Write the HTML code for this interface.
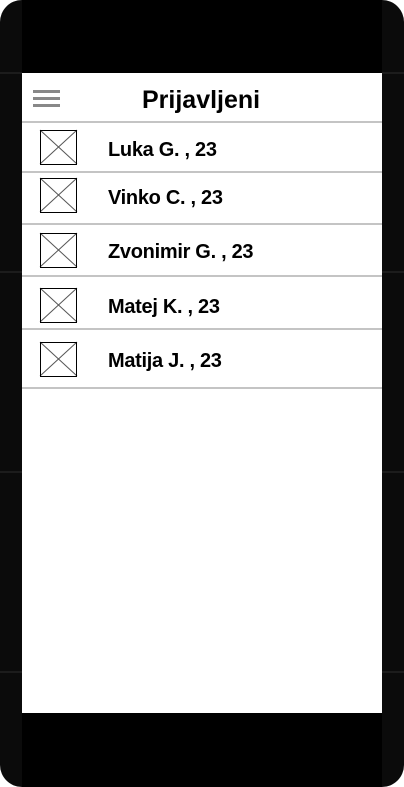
<!DOCTYPE html><html><head><style>
body{margin:0;width:404px;height:787px;background:#fff;position:relative;overflow:hidden;font-family:"Liberation Sans",sans-serif}
.ph{position:absolute;left:0;top:0;width:404px;height:787px;background:#0b0b0b;border-radius:22px}
.scr{position:absolute;left:22px;top:0;width:360px;height:787px;background:#000}
.w{position:absolute;left:22px;top:73px;width:360px;height:640px;background:#fff}
.sl{position:absolute;height:2px;background:#1c1c1c;width:22px}
.hl{position:absolute;left:0;width:360px;height:2px;background:#c4c4c4}
.im{position:absolute;left:18px;width:35px;height:33px;border:1px solid #000}
.t{position:absolute;left:86px;font-weight:bold;font-size:20px;color:#000;letter-spacing:-0.3px}
.bar{position:absolute;left:11px;width:27px;height:3px;background:#888}
</style></head><body>
<div class="ph"></div><div class="scr"></div>
<div class="sl" style="left:0;top:72px"></div><div class="sl" style="left:382px;top:72px"></div>
<div class="sl" style="left:0;top:271px"></div><div class="sl" style="left:382px;top:271px"></div>
<div class="sl" style="left:0;top:471px"></div><div class="sl" style="left:382px;top:471px"></div>
<div class="sl" style="left:0;top:671px"></div><div class="sl" style="left:382px;top:671px"></div>
<div class="w">
<div class="bar" style="top:17px"></div><div class="bar" style="top:24px"></div><div class="bar" style="top:31px"></div>
<div style="position:absolute;left:120px;top:13px;font-size:25px;font-weight:bold">Prijavljeni</div>
<div class="hl" style="top:48px"></div>
<div class="hl" style="top:98px"></div>
<div class="hl" style="top:150px"></div>
<div class="hl" style="top:202px"></div>
<div class="hl" style="top:255px"></div>
<div class="hl" style="top:314px"></div>
<svg style="position:absolute;left:0;top:0" width="360" height="320">
<g stroke="#555" stroke-width="1">
<line x1="18" y1="57" x2="55" y2="91"/><line x1="55" y1="57" x2="18" y2="91"/>
<line x1="18" y1="105" x2="55" y2="139"/><line x1="55" y1="105" x2="18" y2="139"/>
<line x1="18" y1="160" x2="55" y2="194"/><line x1="55" y1="160" x2="18" y2="194"/>
<line x1="18" y1="215" x2="55" y2="249"/><line x1="55" y1="215" x2="18" y2="249"/>
<line x1="18" y1="269" x2="55" y2="303"/><line x1="55" y1="269" x2="18" y2="303"/>
</g></svg>
<div class="im" style="top:57px"></div><div class="t" style="top:66px">Luka G. , 23</div>
<div class="im" style="top:105px"></div><div class="t" style="top:114px">Vinko C. , 23</div>
<div class="im" style="top:160px"></div><div class="t" style="top:168px">Zvonimir G. , 23</div>
<div class="im" style="top:215px"></div><div class="t" style="top:223px">Matej K. , 23</div>
<div class="im" style="top:269px"></div><div class="t" style="top:277px">Matija J. , 23</div>
</div>
</body></html>
